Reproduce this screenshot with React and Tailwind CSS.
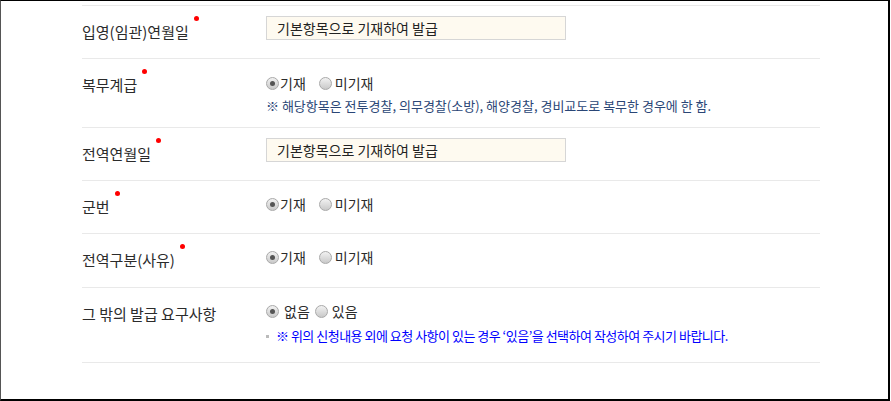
import React from "react";

const font = { fontFamily: '"Noto Sans CJK KR", "Noto Sans", sans-serif' };

function Radio({ checked }) {
  return (
    <span className="inline-flex items-center justify-center w-[13px] h-[13px] rounded-full border border-[#a9a9a9] bg-gradient-to-b from-[#f2f2f2] to-[#c9c9c9]">
      {checked && <span className="w-[5px] h-[5px] rounded-full bg-[#555]" />}
    </span>
  );
}

function Label({ text, required }) {
  return (
    <div className="w-[184px] shrink-0 pt-[16px] leading-[20px] text-[15px] text-[#2b2b2b]">
      <span className="relative">
        {text}
        {required && (
          <span className="absolute -right-[10px] -top-[5px] w-[5px] h-[5px] rounded-full bg-[#f00]" />
        )}
      </span>
    </div>
  );
}

function InputBox() {
  return (
    <div className="pt-[10px]">
      <div className="w-[300px] h-[24px] border border-[#d6d6d6] bg-[#fefaf0] pl-[10px] text-[14px] leading-[22px] text-[#222]">
        기본항목으로 기재하여 발급
      </div>
    </div>
  );
}

function RadioPair({ a, b, wide }) {
  return (
    <div className="flex items-center h-[20px] text-[14px] text-[#2b2b2b]">
      <Radio checked />
      <span className={wide ? "ml-[5px]" : "ml-[1px]"}>{a}</span>
      <span className={wide ? "ml-[5px] flex items-center" : "ml-[13px] flex items-center"}>
        <Radio />
      </span>
      <span className={wide ? "ml-[4px]" : "ml-[3px]"}>{b}</span>
    </div>
  );
}

export default function App() {
  return (
    <div style={font} className="w-[890px] h-[401px] border-t border-l border-r-2 border-b-2 border-black border-l-[#555] bg-white">
      <div className="ml-[81px] mt-[4px] w-[738px] border-t border-[#e9e9e9]">
        <div className="flex h-[53px] border-b border-[#e9e9e9]">
          <Label text="입영(임관)연월일" required />
          <InputBox />
        </div>
        <div className="flex h-[69px] border-b border-[#e9e9e9]">
          <Label text="복무계급" required />
          <div className="pt-[14px]">
            <RadioPair a="기재" b="미기재" />
            <div className="mt-[3px] leading-[20px] text-[13px] text-[#2a4676]">
              ※ 해당항목은 전투경찰, 의무경찰(소방), 해양경찰, 경비교도로 복무한 경우에 한 함.
            </div>
          </div>
        </div>
        <div className="flex h-[53px] border-b border-[#e9e9e9]">
          <Label text="전역연월일" required />
          <InputBox />
        </div>
        <div className="flex h-[53px] border-b border-[#e9e9e9]">
          <Label text="군번" required />
          <div className="pt-[13px]">
            <RadioPair a="기재" b="미기재" />
          </div>
        </div>
        <div className="flex h-[54px] border-b border-[#e9e9e9]">
          <Label text="전역구분(사유)" required />
          <div className="pt-[13px]">
            <RadioPair a="기재" b="미기재" />
          </div>
        </div>
        <div className="flex h-[75px] border-b border-[#e9e9e9]">
          <Label text="그 밖의 발급 요구사항" />
          <div className="pt-[13px]">
            <RadioPair a="없음" b="있음" wide />
            <div className="mt-[5px] flex items-center leading-[20px] text-[13px] tracking-[-0.5px] text-[#0000ff]">
              <span className="w-[3px] h-[3px] bg-[#bbb] mr-[7px]" />
              <span>※ 위의 신청내용 외에 요청 사항이 있는 경우 ‘있음’을 선택하여 작성하여 주시기 바랍니다.</span>
            </div>
          </div>
        </div>
      </div>
    </div>
  );
}
